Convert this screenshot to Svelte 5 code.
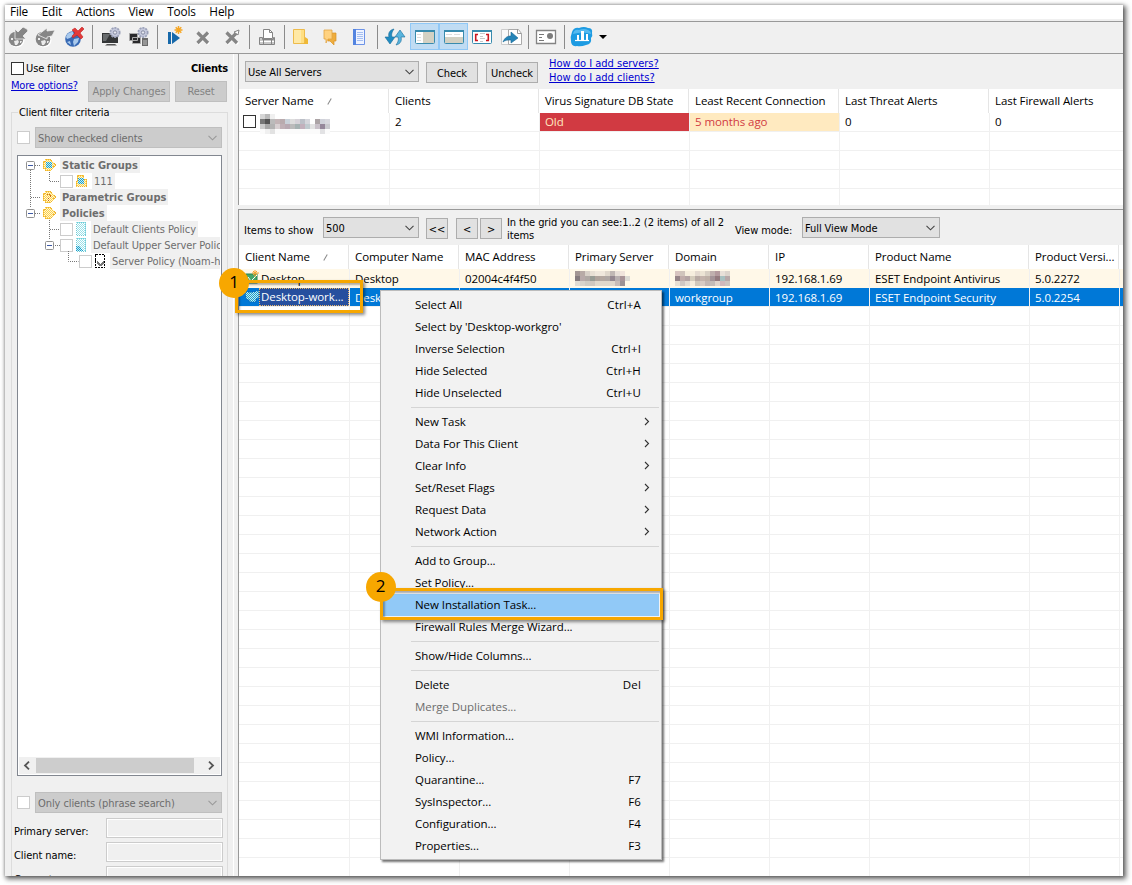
<script lang="ts">
  const menus = ['File', 'Edit', 'Actions', 'View', 'Tools', 'Help'];

  // [icon, slot width]
  const tools: [string, number][] = [
    ['ball-down', 25], ['ball-left', 30], ['globe', 29], ['sep', 7],
    ['pc', 29], ['pcs', 28], ['sep', 8],
    ['task', 28], ['cross', 28], ['cross-alt', 29], ['sep', 6],
    ['printer', 30], ['sep', 4],
    ['folder', 30], ['chat', 27], ['notes', 32], ['sep', 4],
    ['sync', 31], ['pane-right', 29], ['pane-bottom', 29], ['brackets', 28], ['export', 30], ['sep', 4],
    ['card', 32], ['sep', 4],
    ['cloud', 32], ['caret', 10],
  ];

  const serverCols = ['Server Name', 'Clients', 'Virus Signature DB State', 'Least Recent Connection', 'Last Threat Alerts', 'Last Firewall Alerts'];

  const clientCols: [string, number][] = [
    ['Client Name', 110], ['Computer Name', 110], ['MAC Address', 110], ['Primary Server', 100],
    ['Domain', 100], ['IP', 100], ['Product Name', 160], ['Product Versi...', 90], ['', 4],
  ];
  const clientRows = [
    { kind: 'fresh', cells: ['Desktop', 'Desktop', '02004c4f4f50', '#a', '#b', '192.168.1.69', 'ESET Endpoint Antivirus', '5.0.2272', ''] },
    { kind: 'selected', cells: ['Desktop-work...', 'Desk', '', '', 'workgroup', '192.168.1.69', 'ESET Endpoint Security', '5.0.2254', ''] },
  ];

  type Item = { label: string; key?: string; sub?: boolean; off?: boolean; hot?: boolean };
  const groups: Item[][] = [
    [
      { label: 'Select All', key: 'Ctrl+A' },
      { label: "Select by 'Desktop-workgro'" },
      { label: 'Inverse Selection', key: 'Ctrl+I' },
      { label: 'Hide Selected', key: 'Ctrl+H' },
      { label: 'Hide Unselected', key: 'Ctrl+U' },
    ],
    [
      { label: 'New Task', sub: true },
      { label: 'Data For This Client', sub: true },
      { label: 'Clear Info', sub: true },
      { label: 'Set/Reset Flags', sub: true },
      { label: 'Request Data', sub: true },
      { label: 'Network Action', sub: true },
    ],
    [
      { label: 'Add to Group...' },
      { label: 'Set Policy...' },
      { label: 'New Installation Task...', hot: true },
      { label: 'Firewall Rules Merge Wizard...' },
    ],
    [{ label: 'Show/Hide Columns...' }],
    [{ label: 'Delete', key: 'Del' }, { label: 'Merge Duplicates...', off: true }],
    [
      { label: 'WMI Information...' },
      { label: 'Policy...' },
      { label: 'Quarantine...', key: 'F7' },
      { label: 'SysInspector...', key: 'F6' },
      { label: 'Configuration...', key: 'F4' },
      { label: 'Properties...', key: 'F3' },
    ],
  ];

  // mosaics over private names, one colour per 5px block
  const mosaics: Record<string, string[][]> = {
    server: [
      ['#d6d6d6', '#bbb', '#f0f0f0'],
      ['#777', '#555', '#bbb', '#c3b5b7', '#b9abae', '#c9d1d9', '#ddd', '#d6d2d8', '#bcc0c8', '#d5d6dc', '#fff', '#aca4a6', '#d0d2da', '#d8d8de'],
      ['#ccc', '#a8a8a8', '#b3b3b3', '#d8d0d2', '#c0b0b6', '#b8a9b2', '#bbb', '#a6b2b2', '#c2b0bc', '#c0cacf', '#e3e3e3', '#c9c1c9', '#95879a', '#c9c9ce'],
      ['#fbfbfb', '#f0f0f0', '#e2e2e2', '#fbfbfb', '#fbfbfb', '#fbfbfb', '#fbfbfb', '#fbfbfb', '#fbfbfb', '#fbfbfb', '#fbfbfb', '#fbfbfb', '#e2e2e4', '#fbfbfb'],
    ],
    '#a': [
      ['#a39694', '#b8aaa6', '#d8d0c8', '#e8e0d4', '#f0e8dc', '#f0e8dc', '#e0d8cc', '#c0b8b4', '#e8e0d8', '#f0e4dc'],
      ['#857b7e', '#b8a9a9', '#b0a8a4', '#989c94', '#b0a49c', '#b4a8a0', '#b0a8a4', '#948890', '#b8b0b0', '#a89498', '#dcdad4'],
      ['#e0dcd4', '#d8d4cc', '#d0ccc4', '#d0c8c0', '#e0d8cc', '#e0d8cc', '#e0d8cc', '#e0d8cc', '#c8bcb8', '#9c9294'],
    ],
    '#b': [
      ['#d8c4c0', '#d0c4bc', '#f6eede', '#f6eede', '#e4dad0', '#ece4d4', '#d8d0c4', '#c0b0ae', '#b49a9e', '#e8e0d8', '#dcd4cc'],
      ['#968488', '#c0acaa', '#b4a4a4', '#d4ccbc', '#b8aaa4', '#c4b4ac', '#beb0a6', '#a49498', '#947a7e', '#a8c0c0', '#b8a8a8'],
      ['#e8e0d4', '#d0c8c4', '#e4dcd4', '#f4ecdc', '#d0c8bc', '#d8ccc4', '#c4b8b4', '#c4bcb8', '#e0d4cc', '#d0b8bc', '#ccc4c0'],
    ],
  };
</script>

{#snippet mosaic(name: string)}
  <svg class="mosaic" width="70" height={mosaics[name].length * 5} shape-rendering="crispEdges">
    {#each mosaics[name] as row, y}
      {#each row as c, x}<rect x={x * 5} y={y * 5} width="5" height="5" fill={c} />{/each}
    {/each}
  </svg>
{/snippet}

{#snippet chevron(color: string)}
  <svg class="chev" width="9" height="6" viewBox="0 0 9 6"><path d="M.5 .8 4.5 4.8 8.5 .8" fill="none" stroke={color} stroke-width="1.1" /></svg>
{/snippet}

{#snippet icon(name: string)}
  <svg width="24" height="24" viewBox="0 0 24 24">
    {#if name === 'ball-down' || name === 'ball-left'}
      <circle cx="11" cy="15" r="7.500" fill="#fff" />
      <circle cx="10" cy="14" r="7.300" fill="#868686" />
      <path d="M5 13h2v2H5zM8 16l4-1 1 2-2 3H9zM14 16h2l-1 2h-1z" fill="#ececec" />
      {#if name === 'ball-down'}
        <path d="M21 4l1 2-5 5 3 3H9V4l3 3 5-5z" fill="#868686" stroke="#f0f0f0" stroke-width=".8" />
      {:else}
        <path d="M5 10l9-7v3l8-1-3 6-5 1v2z" fill="#868686" stroke="#f0f0f0" stroke-width=".8" />
      {/if}
    {:else if name === 'globe'}
      <circle cx="10" cy="14" r="7.800" fill="#3769b4" />
      <path d="M3 12c1-4 4-5 7-5l1 3-4 3-3 1zM11 14l5-1-1 4-4 4-1-4zM4 17l3-1 1 4z" fill="#a9c9ec" />
      <path d="M12 3l3 3 4-4 2 2-4 4 3 4-2 2-4-4-4 3-1-2 3-3-3-3z" fill="#e23a3a" stroke="#c32222" stroke-width=".6" />
    {:else if name === 'pc' || name === 'pcs'}
      {#if name === 'pc'}
        <path d="M3 8h16v10H3z" fill="#343637" /><path d="M4 9h7l-4 7H4z" fill="#686b6d" /><path d="M8 19h8l2 1.500H6z" fill="#555" />
      {:else}
        <path d="M2.500 8.500h8v7h-8zM5.500 12.500h8v6h-8z" fill="#29292b" stroke="#aaa" /><path d="M15 13h6v8h-6z" fill="#6b6b6b" /><path d="M16 15h4v5h-4z" fill="#969696" />
      {/if}
      <circle cx="16" cy="7.500" r="4.700" fill="#c4c8dc" stroke="#9aa0b8" stroke-width="1.700" stroke-dasharray="2 1" />
      <circle cx="16" cy="7.500" r="1.700" fill="#e6e8f1" stroke="#6a718a" stroke-width=".7" />
    {:else if name === 'task'}
      <path d="M5 7h3v12H5zM9 7l8 6-8 6z" fill="#1769aa" />
      <path d="M15.500 1v8M11.500 5h8M12.700 2.200l5.600 5.600M18.300 2.200l-5.600 5.600" stroke="#f6a623" stroke-width="1.500" />
    {:else if name === 'cross' || name === 'cross-alt'}
      <path d="M7 8l11 11M18 8L7 19" stroke="#fff" stroke-width="3" />
      <path d="M6.500 7.500l10.500 10.500M17 7.500L6.500 18" stroke="#858585" stroke-width="3.200" />
      {#if name === 'cross-alt'}<path d="M14 7l5-2-1 5z" fill="#fff" stroke="#858585" />{/if}
    {:else if name === 'printer'}
      <path d="M8.500 4.500h6l3 3v6h-9z" fill="#fff" stroke="#858585" /><path d="M14.500 4.500v3h3" fill="none" stroke="#858585" />
      <path d="M4.500 12.500h3v2h11v-2h1v7h-15z" fill="#c9c9c9" stroke="#858585" /><path d="M5 16.500h14" stroke="#fff" /><path d="M8.500 13.500h8v6h-8z" fill="none" stroke="#858585" />
    {:else if name === 'folder'}
      <path d="M4.500 4.500h11v14h-11z" fill="#ffdf82" stroke="#edbb4c" /><path d="M5 5h7v13H5z" fill="#ffe9a6" /><path d="M16 12l3 2v5h-5l2-2z" fill="#efb936" />
    {:else if name === 'chat'}
      <path d="M10 8h8v8h-2v4l-4-4h-2z" fill="#efad3d" stroke="#d99326" stroke-width=".7" /><path d="M6 5h8v9h-4l-2 4v-4H6z" fill="#ffd280" stroke="#e1a343" stroke-width=".8" />
    {:else if name === 'notes'}
      <path d="M6.500 4.500h11v15h-11z" fill="#eef3ff" stroke="#6d93e7" /><path d="M6 4h3v16H6z" fill="#5384e0" /><path d="M10 7.500h6M10 9.500h6M10 11.500h6M10 13.500h6M10 15.500h6" stroke="#a5bff1" />
    {:else if name === 'sync'}
      <path d="M11 4C6 5 5 9 6 12H2l5 7 5-7H9c-1-3 0-5 2-8z" fill="#218cc1" stroke="#176b9a" stroke-width=".6" />
      <path d="M13 20c5-1 6-5 5-8h4l-5-7-5 7h3c1 3 0 5-2 8z" fill="#58b4dd" stroke="#176b9a" stroke-width=".6" />
    {:else if name === 'pane-right' || name === 'pane-bottom' || name === 'brackets'}
      <rect x="2.500" y="5.500" width="19" height="13" rx="1" fill="#fff" stroke="#388bae" /><path d="M2 6h20" stroke="#388bae" stroke-width="2" />
      {#if name === 'pane-right'}
        <path d="M10 7h11v11H10z" fill="#d3d1c3" /><path d="M4 9.500h4M4 12.500h4M4 15.500h4" stroke="#ddd" />
      {:else if name === 'pane-bottom'}
        <path d="M3 12h18v6H3z" fill="#d3d1c3" /><path d="M4 9.500h6M12 9.500h6" stroke="#ddd" />
      {:else}
        <path d="M8 9.500H5.700v6H8M16 9.500h2.300v6H16" fill="none" stroke="#ca1720" stroke-width="1.600" /><path d="M10 8.500h5M10 11.500h3M10 13.500h5M10 16.500h3" stroke="#c8c8c8" />
      {/if}
    {:else if name === 'export'}
      <path d="M2.500 4.500h9v15h-9z" fill="#fafafa" stroke="#ccc" /><path d="M9.500 4.500h10l3 4v11h-13z" fill="#fff" stroke="#aaa" /><path d="M18.500 4v4.500h4" fill="none" stroke="#999" />
      <path d="M4 17c2-5 5-6 8-6V7l7 6-7 5v-3c-3 0-6 0-8 2z" fill="#2584b8" stroke="#176896" stroke-width=".6" />
    {:else if name === 'card'}
      <path d="M2.500 5.500h19v13h-19z" fill="#fff" stroke="#838383" stroke-width="1.300" /><path d="M5 9.500h5M5 12.500h3M5 15.500h5" stroke="#777" /><circle cx="16" cy="11" r="3" fill="#7c7c7c" />
    {:else if name === 'cloud'}
      <path d="M2 7q2-5 7-4 5-2 9 0 5 0 4 5 1 3-1 5 1 6-5 7-5 2-9 1-6 1-6-5-1-4 1-9z" fill="#1d9be2" />
      <path d="M3 9q1-5 6-4 5-2 9 0 3 1 3 4-8-3-18 0z" fill="#55baf0" />
      <path d="M5 15.500h14" stroke="#fff" stroke-width="1.200" /><path d="M7 10h2v5H7zM11 6h3v9h-3zM16 9h2v6h-2z" fill="#fff" />
    {/if}
  </svg>
{/snippet}

{#snippet treeIcon(shape: string)}
  <svg class="tree-icon" width="14" height="14" viewBox="0 0 14 14" shape-rendering="crispEdges">
    {#if shape === 'policy' || shape === 'upper'}
      <rect x="2" y="0" width="10" height="14" fill="url(#dots-aqua)" /><rect x="2.500" y=".5" width="9" height="13" fill="none" stroke="#6fcbd6" stroke-dasharray="1 1" />
      {#if shape === 'upper'}<path d="M2 8h4l3 5H2z" fill="url(#dots-blue)" />{/if}
    {:else if shape === 'merged'}
      <rect x="2.500" y=".5" width="9" height="13" fill="#fff" stroke="#000" stroke-dasharray="2 1" /><path d="M4 7h1v1h1v1h1v1h1V9h1V8h1V7h1v3h-1v1H9v1H6v-1H5v-1H4z" fill="#777" />
    {:else}
      <path d={shape === 'item' ? 'M3 1h7v4h3v8H2z' : 'M1 3h2V1h6l5 6-5 6H3v-2H1z'} fill="url(#dots-gold)" />
      <path d={shape === 'item' ? 'M3.500 1.500h6v4h3v7h-10z' : 'M1.500 3.500h2v-2h5l5 5.500-5 5.500h-5v-2h-2z'} fill="none" stroke="#eeb02c" stroke-dasharray="1 1" />
      {#if shape === 'static' || shape === 'item'}<rect x="4" y="4" width="6" height="6" fill="url(#dots-blue)" />{/if}
      {#if shape === 'param'}<path d="M4.500 4.500h4v2l-2 2v3" fill="none" stroke="#c8681a" stroke-dasharray="1 1" />{/if}
    {/if}
  </svg>
{/snippet}

<svg class="defs" width="0" height="0">
  <defs>
    <pattern id="dots-gold" width="2" height="2" patternUnits="userSpaceOnUse"><path d="M0 0h2v2H0z" fill="#fff6d4" /><path d="M0 0h1v1H0zM1 1h1v1H1z" fill="#fbcf4a" /></pattern>
    <pattern id="dots-blue" width="2" height="2" patternUnits="userSpaceOnUse"><path d="M0 0h2v2H0z" fill="#c6edf5" /><path d="M0 0h1v1H0zM1 1h1v1H1z" fill="#1c9fcb" /></pattern>
    <pattern id="dots-aqua" width="2" height="2" patternUnits="userSpaceOnUse"><path d="M0 0h2v2H0z" fill="#fff" /><path d="M0 0h1v1H0zM1 1h1v1H1z" fill="#9be0e8" /></pattern>
  </defs>
</svg>

<div class="page">
  <div class="window">
    <nav class="menubar">
      {#each menus as m}<span>{m}</span>{/each}
    </nav>
    <div class="toolbar">
      {#each tools as [name, width]}
        <div class="slot" class:pressed={name.startsWith('pane')} style="width: {width}px">
          {#if name === 'sep'}<i class="sep"></i>
          {:else if name === 'caret'}<i class="caret"></i>
          {:else}{@render icon(name)}{/if}
        </div>
      {/each}
    </div>

    <div class="content">
      <aside class="filter">
        <div class="filter-top">
          <div class="filter-left">
            <label class="use"><i class="box dark"></i>Use filter</label>
            <a href="#more">More options?</a>
          </div>
          <div class="filter-right">
            <b>Clients</b>
            <div class="filter-buttons"><button disabled class="apply">Apply Changes</button><button disabled class="reset">Reset</button></div>
          </div>
        </div>
        <div class="criteria">
          <span class="legend">Client filter criteria</span>
          <div class="combo-row"><i class="box"></i><div class="combo off">Show checked clients {@render chevron('#999')}</div></div>
          <div class="tree">
            <div class="tree-rows">
              <svg class="branches" width="90" height="112">
                <path d="M13.500 14v38M18 9.500h6M14 41.500h10M18 57.500h6M32.500 16v9.500h10M32.500 64v9.500h10M32.500 74v10M38 89.500h5M51.500 95v10.500h10" fill="none" stroke="#777" stroke-dasharray="1 1" />
                {#each [[9, 5], [9, 53], [28, 85]] as [x, y]}
                  <g transform="translate({x} {y})"><rect x=".5" y=".5" width="8" height="8" rx="1" fill="#fff" stroke="#919191" /><path d="M2 4.500h5" stroke="#3e5aa5" /></g>
                {/each}
              </svg>
              <div class="tree-row root">{@render treeIcon('static')}<b>Static Groups</b></div>
              <div class="tree-row child"><i class="box"></i>{@render treeIcon('item')}<span class="num">111</span></div>
              <div class="tree-row root">{@render treeIcon('param')}<b>Parametric Groups</b></div>
              <div class="tree-row root">{@render treeIcon('policies')}<b>Policies</b></div>
              <div class="tree-row child"><i class="box"></i>{@render treeIcon('policy')}<span>Default Clients Policy</span></div>
              <div class="tree-row child"><i class="box"></i>{@render treeIcon('upper')}<span>Default Upper Server Policy</span></div>
              <div class="tree-row leaf"><i class="box"></i>{@render treeIcon('merged')}<span>Server Policy (Noam-hp)</span></div>
            </div>
            <div class="scroll">
              <svg width="8" height="9"><path d="M6 .7 2 4.500l4 3.800" fill="none" stroke="#555" stroke-width="1.800" /></svg>
              <i class="thumb"></i>
              <svg width="8" height="9"><path d="M2 .7 6 4.500 2 8.300" fill="none" stroke="#555" stroke-width="1.800" /></svg>
            </div>
          </div>
          <div class="combo-row phrase"><i class="box"></i><div class="combo off">Only clients (phrase search) {@render chevron('#999')}</div></div>
          {#each ['Primary server:', 'Client name:', 'Computer name:'] as f}
            <div class="field"><span>{f}</span><i></i></div>
          {/each}
        </div>
      </aside>

      <main>
        <section class="servers">
          <div class="server-bar">
            <div class="combo all">Use All Servers {@render chevron('#444')}</div>
            <button class="check">Check</button>
            <button class="uncheck">Uncheck</button>
            <div class="links"><a href="#servers">How do I add servers?</a><a href="#clients">How do I add clients?</a></div>
          </div>
          <div class="head">
            {#each serverCols as c, i}
              <div class="th wide">{c}{#if i === 0}<i class="sort"></i>{/if}</div>
            {/each}
          </div>
          <div class="rows">
            <div class="tr">
              <div class="td wide name"><i class="box dark"></i>{@render mosaic('server')}</div>
              <div class="td wide">2</div>
              <div class="td wide old">Old</div>
              <div class="td wide ago">5 months ago</div>
              <div class="td wide">0</div>
              <div class="td wide">0</div>
            </div>
            {#each Array(4) as _}
              <div class="tr">{#each serverCols as _c}<div class="td wide"></div>{/each}</div>
            {/each}
          </div>
        </section>

        <section class="clients">
          <div class="client-bar">
            <span class="items">Items to show</span>
            <div class="combo count">500 {@render chevron('#444')}</div>
            <button class="pg first">&lt;&lt;</button>
            <button class="pg prev">&lt;</button>
            <button class="pg">&gt;</button>
            <p>In the grid you can see:1..2 (2 items) of all 2<br />items</p>
            <span class="mode-label">View mode:</span>
            <div class="combo mode">Full View Mode {@render chevron('#444')}</div>
          </div>
          <div class="head">
            {#each clientCols as [c, w], i}
              <div class="th" style="width: {w}px">{c}{#if i === 0}<i class="sort"></i>{/if}</div>
            {/each}
          </div>
          <div class="rows">
            {#each clientRows as r}
              <div class="tr {r.kind}">
                {#each r.cells as cell, i}
                  <div class="td" class:client={i === 0} style="width: {clientCols[i][1]}px">
                    {#if i === 0}
                      <svg class="monitor" width="14" height="16" viewBox="0 0 14 16">
                        {#if r.kind === 'fresh'}
                          <rect x="1" y="4" width="11" height="9" fill="#45a66c" stroke="#258050" /><path d="M3 7l3 4 6-6" fill="none" stroke="#fff" /><path d="M10 0v7M7 3h7M8 1l4 4M12 1 8 5" stroke="#f6a532" />
                        {:else}
                          <path d="M0 3h9l5-2v8l-3 1v3H4v-2l-3-1z" fill="url(#dots-blue)" stroke="#0868ba" stroke-dasharray="2 1" />
                        {/if}
                      </svg>
                      <span>{cell}</span>
                    {:else if cell.startsWith('#')}{@render mosaic(cell)}
                    {:else}{cell}{/if}
                  </div>
                {/each}
              </div>
            {/each}
            {#each Array(31) as _}
              <div class="tr">{#each clientCols as [_c, w]}<div class="td" style="width: {w}px"></div>{/each}</div>
            {/each}
          </div>
        </section>
      </main>
    </div>
  </div>

  <div class="context">
    {#each groups as group, i}
      {#if i > 0}<hr />{/if}
      {#each group as item}
        <div class="item" class:off={item.off} class:hot={item.hot}>
          <span>{item.label}</span>
          {#if item.key}<span class="key">{item.key}</span>{/if}
          {#if item.sub}<svg width="6" height="9"><path d="M1 1 4.500 4.500 1 8" fill="none" stroke="#333" stroke-width="1.100" /></svg>{/if}
        </div>
      {/each}
    {/each}
  </div>

  <div class="mark one"></div>
  <div class="mark two"></div>
  <div class="badge b1">1</div>
  <div class="badge b2">2</div>
</div>

<style>
  :global(body) { margin: 0; background: #fff; }
  * { box-sizing: border-box; }
  .defs { position: absolute; }
  .page { position: relative; width: 1132px; height: 885px; padding: 5px 9px 9px 5px; overflow: hidden; font: 11.5px "Open Sans", "Noto Sans", sans-serif; letter-spacing: -0.06px; color: #000; }
  .window { width: 1118px; height: 871px; display: flex; flex-direction: column; background: #f0f0f0; box-shadow: 2px 2px 5px 1px rgba(0, 0, 0, 0.6), 0 0 3px rgba(0, 0, 0, 0.25); }
  svg { display: block; flex: none; }
  a { color: #0000d0; text-decoration: underline; }
  button { display: flex; align-items: center; justify-content: center; height: 21px; padding: 0; border: 1px solid #adadad; background: #e1e1e1; color: #000; font: inherit; letter-spacing: inherit; }
  button:disabled { background: #ccc; border-color: #bfbfbf; color: #838383; }

  .menubar { display: flex; flex: none; gap: 13.6px; height: 16px; padding: 0 5px; line-height: 12px; background: #fff; border-bottom: 2px solid #f0f0f0; font-size: 11.8px; letter-spacing: -0.15px; }
  .toolbar { display: flex; height: 33px; flex: none; border-top: 1px solid #999; border-bottom: 1px solid #999; }
  .slot { display: flex; align-items: center; justify-content: center; flex: none; height: 30px; }
  .slot svg { margin: 0 -3px; }
  .pressed { height: 27px; margin-top: 1px; background: #c0dcf3; border: 1px solid #90c8f6; }
  .sep { width: 1px; height: 24px; background: #8b8b8b; }
  .caret { border: 4px solid transparent; border-top-color: #000; border-bottom: 0; }

  .content { display: flex; flex: 1; min-height: 0; overflow: hidden; font-family: "DejaVu Sans Condensed", "DejaVu Sans", sans-serif; font-stretch: condensed; font-size: 11px; letter-spacing: -0.08px; }
  .filter { width: 229px; margin-right: 4px; border-right: 1px solid #fff; padding: 8px 5px 0 6px; }
  .filter-top { display: flex; justify-content: space-between; height: 50px; }
  .filter-left { display: flex; flex-direction: column; gap: 3px; line-height: 14px; }
  .use { display: flex; align-items: center; gap: 2px; height: 13px; }
  .filter-left a { letter-spacing: -0.2px; margin-top: 1px; }
  .filter-right { display: flex; flex-direction: column; align-items: flex-end; line-height: 14px; }
  .filter-right b { letter-spacing: -0.2px; }
  .filter-buttons { display: flex; gap: 5px; padding: 5px 1px 0 0; }
  .apply { width: 82px; }
  .reset { width: 52px; }
  .box { flex: none; width: 13px; height: 13px; border: 1px solid #ccc; background: #fff; }
  .box.dark { border-color: #333; }

  .criteria { width: 217px; height: 900px; border: 1px solid #dcdcdc; padding: 0 5px; }
  .legend { display: block; width: max-content; margin: -7px 0 0 1px; padding: 0 1px; line-height: 13px; letter-spacing: -0.12px; background: #f0f0f0; }
  .combo-row { display: flex; align-items: center; gap: 5px; margin-top: 8px; }
  .combo { display: flex; align-items: center; justify-content: space-between; height: 21px; padding: 1px 4px 0 2px; border: 1px solid #adadad; background: #e1e1e1; }
  .combo.off { flex: 1; background: #ccc; border-color: #bfbfbf; color: #6d6d6d; }
  .tree { display: flex; flex-direction: column; justify-content: space-between; height: 621px; width: 205px; margin-top: 7px; padding: 1px; border: 1px solid #828790; background: #fff; }
  .tree-rows { position: relative; overflow: hidden; }
  .branches { position: absolute; left: -2px; top: -1px; }
  .tree-row { display: flex; align-items: center; height: 16px; color: #6d6d6d; white-space: nowrap; }
  .tree-row b, .tree-row span { line-height: 15px; padding: 1px 2px 0; background: #f0f0f0; }
  .tree-row b { margin-left: 4px; letter-spacing: 0; }
  .tree-row span { margin-left: 3px; }
  .tree-row span.num { margin-left: 4px; }
  .root { padding-left: 23px; }
  .child { padding-left: 41px; }
  .child svg, .leaf svg { margin-left: 1px; }
  .leaf { padding-left: 60px; }
  .scroll { display: flex; align-items: center; justify-content: space-between; height: 17px; padding: 0 5px 0 4px; background: #f0f0f0; }
  .thumb { width: 158px; height: 15px; margin-right: 9px; background: #cdcdcd; }
  .phrase { margin-top: 16px; margin-bottom: 5px; }
  .field { display: flex; justify-content: space-between; height: 24px; margin-left: -3px; margin-right: -1px; line-height: 27px; }
  .field i { width: 117px; height: 20px; border: 1px solid #ccc; box-shadow: inset 0 0 0 1px #fff; }

  main { width: 885px; display: flex; flex-direction: column; gap: 4px; }
  section { border-left: 1px solid #999; overflow: hidden; flex: none; }
  .servers { height: 151px; }
  .clients { height: 680px; border-top: 1px solid #999; }
  .server-bar { display: flex; height: 35px; padding: 7px 0 0 6px; }
  .server-bar button { margin-top: 1px; padding-top: 1px; }
  .all { width: 174px; }
  .check { width: 52px; margin-left: 7px; }
  .uncheck { width: 52px; margin-left: 8px; }
  .links { display: flex; flex-direction: column; margin: -4px 0 0 11px; line-height: 14px; letter-spacing: 0; }
  .head { display: flex; height: 24px; background: #fff; font: 11.5px "Open Sans", "Noto Sans", sans-serif; }
  .th { display: flex; align-items: center; flex: none; padding: 0 0 2px 6px; border-right: 1px solid #e5e5e5; white-space: nowrap; }
  .wide { width: 150px; }
  .sort { width: 1px; height: 7px; margin: 2px 0 0 15px; background: #888; transform: rotate(30deg); }
  .rows { background: #fff; font: 11.5px "Open Sans", "Noto Sans", sans-serif; }
  .servers .rows { height: 92px; overflow: hidden; }
  .tr { display: flex; height: 19px; border-bottom: 1px solid #f0f0f0; }
  .td { display: flex; align-items: center; flex: none; padding-left: 5px; border-left: 1px solid #f0f0f0; white-space: nowrap; overflow: hidden; }
  .td:first-child { border-left: 0; }
  .servers .td { padding-bottom: 1px; }
  .name { padding-left: 4px; overflow: visible; }
  .name .mosaic { margin: 2px 0 -2px 4px; }
  .old { background: #d13a42; color: #ffe8c0; }
  .ago { background: #ffeac0; color: #d13a42; }
  .fresh { background: #fff8e8; border-color: #fff8e8; }
  .selected { background: #0078d7; color: #fff; }
  .td.client { padding-left: 6px; }
  .client span { padding: 0 2px; line-height: 17px; }
  .selected .client span { background: #264f9e; border: 1px dotted #e9b76b; line-height: 16px; width: 90px; padding: 0 1px; }

  .client-bar { display: flex; align-items: flex-start; height: 35px; padding: 7px 0 0 5px; white-space: nowrap; }
  .items { width: 79px; line-height: 27px; letter-spacing: 0; }
  .count { width: 96px; }
  .pg { width: 22px; margin-top: 1px; padding-top: 1px; }
  .first { margin-left: 7px; }
  .prev { margin: 1px 2px 0 8px; }
  .client-bar p { width: 222px; margin: -1px 0 0 5px; line-height: 13px; }
  .mode-label { width: 73px; line-height: 27px; padding-left: 6px; }
  .mode { width: 138px; }

  .context { position: absolute; left: 380px; top: 290px; width: 282px; height: 570px; padding: 3px 2px; border: 1px solid #bcbcbc; background: #f2f2f2; box-shadow: 2px 2px 2px rgba(0, 0, 0, 0.55); }
  .item { display: flex; align-items: center; justify-content: space-between; height: 22px; padding: 0 9px 2px 32px; white-space: nowrap; }
  .item .key { margin-right: 9px; letter-spacing: 0.15px; }
  .item svg { margin-top: 1px; }
  .item.off { color: #6d6d6d; }
  .item.hot { background: #91c9f7; }
  hr { height: 1px; margin: 3px 0 3px 28px; border: 0; background: #d5d5d5; }
  .mark { position: absolute; border: 3px solid #f7a700; box-shadow: 2px 2px 3px rgba(0, 0, 0, 0.45), inset 2px 2px 2px rgba(0, 0, 0, 0.3); }
  .one { left: 235px; top: 280px; width: 128px; height: 33px; }
  .two { left: 380px; top: 588px; width: 283px; height: 32px; }
  .badge { position: absolute; display: flex; align-items: center; justify-content: center; width: 30px; height: 30px; padding-bottom: 3px; border-radius: 50%; background: #f7a700; font-size: 17px; font-weight: 500; }
  .b1 { left: 219px; top: 268px; }
  .b2 { left: 366px; top: 572px; padding-right: 1px; }
</style>
